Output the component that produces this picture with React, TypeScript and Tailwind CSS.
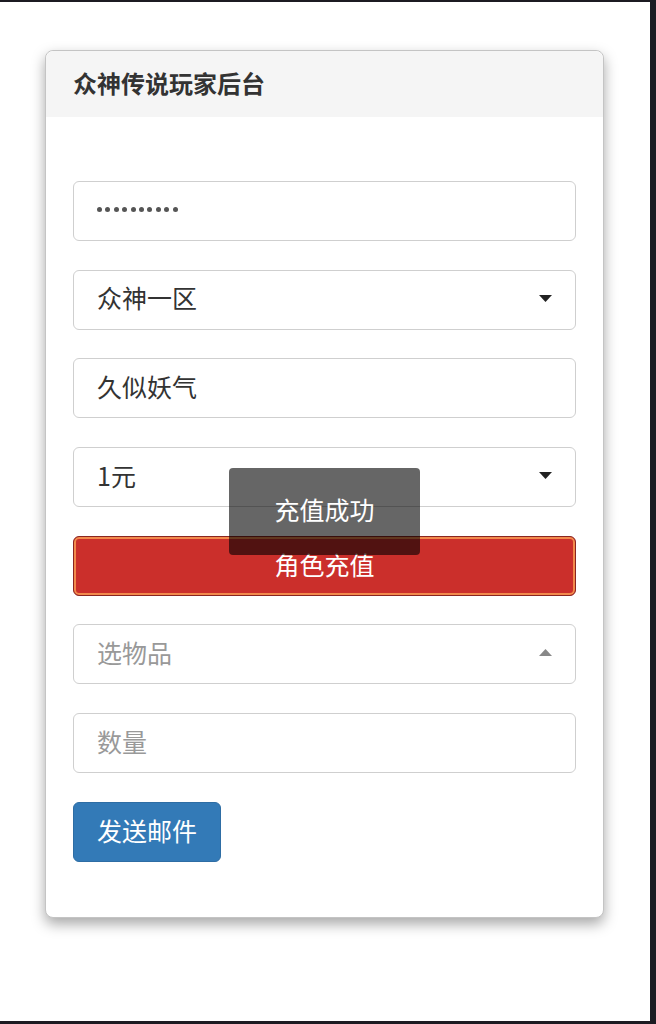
import React from 'react';

const font = { fontFamily: '"Noto Sans CJK SC", "Noto Sans", sans-serif' };

const Caret = ({ up = false, light = false }: { up?: boolean; light?: boolean }) => (
  <svg width="13" height="7" viewBox="0 0 13 7" className="ml-auto">
    <path d={up ? 'M0 7 L6.5 0 L13 7 Z' : 'M0 0 L13 0 L6.5 7 Z'} fill={light ? '#888' : '#222'} />
  </svg>
);

const Field = ({ children, placeholder = false }: { children: React.ReactNode; placeholder?: boolean }) => (
  <div
    className={`flex h-[60px] items-center rounded-md border border-[#cfcfcf] bg-white pl-[23px] pr-[23px] pb-[3px] text-[25px] ${
      placeholder ? 'text-[#999]' : 'text-[#333]'
    }`}
  >
    {children}
  </div>
);

export default function App() {
  return (
    <div
      className="flex h-[1024px] w-[656px] flex-col border-t-2 border-r-[6px] border-b-[3px] border-[#1c1b22] bg-white"
      style={font}
    >
      <div className="relative ml-[45px] mt-[48px] w-[559px] rounded-lg border border-[#c4c4c4] bg-white shadow-[0_6px_14px_rgba(0,0,0,0.35)]">
        {/* Header */}
        <div className="flex h-[66px] items-center rounded-t-lg bg-[#f5f5f5] px-[27px] pb-[2px] text-[24px] font-bold text-[#333]">
          众神传说玩家后台
        </div>

        {/* Form */}
        <div className="flex flex-col gap-[28.7px] px-[27px] pt-[64px] pb-[55px]">
          <Field>
            <div className="flex gap-[3.4px]">
              {Array.from({ length: 10 }).map((_, i) => (
                <span key={i} className="h-[5px] w-[5px] rounded-full bg-[#555]" />
              ))}
            </div>
          </Field>
          <Field>
            众神一区
            <Caret />
          </Field>
          <Field>久似妖气</Field>
          <Field>
            1元
            <Caret />
          </Field>
          <button className="flex h-[60px] items-center justify-center rounded-md border border-[#8a2520] bg-[#cb2f2b] pb-[3px] text-[25px] text-white shadow-[inset_0_0_0_2px_#f28a4c]">
            角色充值
          </button>
          <Field placeholder>
            选物品
            <Caret up light />
          </Field>
          <Field placeholder>数量</Field>
          <button className="flex h-[60px] w-[148px] items-center justify-center rounded-md border border-[#2e6da4] bg-[#337ab7] pb-[3px] text-[25px] text-white">
            发送邮件
          </button>
        </div>

        {/* Toast */}
        <div className="absolute left-[183px] top-[417px] flex h-[87px] w-[191px] items-center justify-center rounded bg-black/60 pb-[3px] text-[25px] text-white">
          充值成功
        </div>
      </div>
    </div>
  );
}
